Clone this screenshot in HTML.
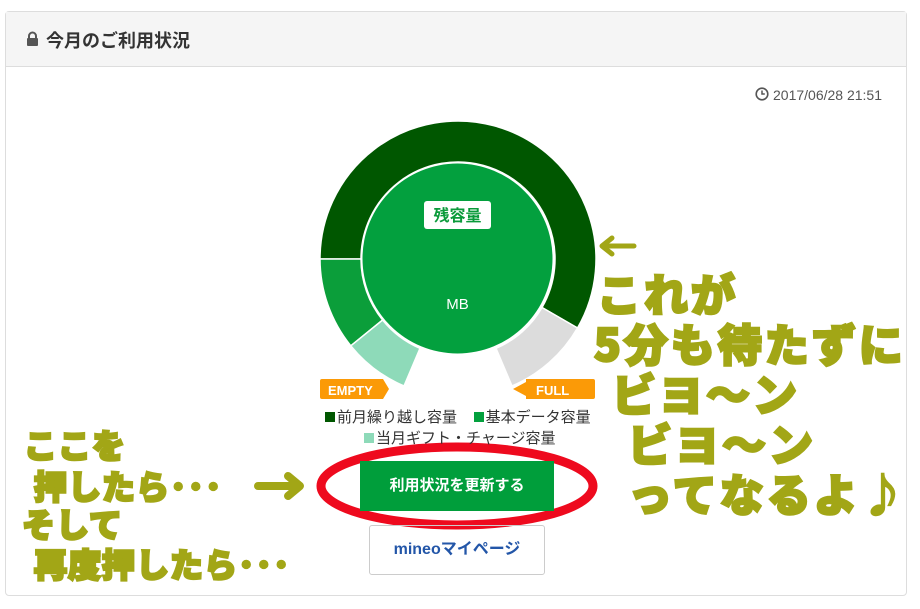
<!DOCTYPE html>
<html><head><meta charset="utf-8"><style>
body{margin:0;width:920px;height:609px;background:#fff;font-family:"Liberation Sans","Noto Sans CJK JP",sans-serif;position:relative;overflow:hidden}
.panel{position:absolute;left:5px;top:11px;width:902px;height:585px;border:1px solid #ddd;border-radius:4px;box-sizing:border-box}
.hd{position:absolute;left:0;top:0;right:0;height:54px;background:#f5f5f5;border-bottom:1px solid #ddd}
.hd span{position:absolute;left:40px;top:15px;font-size:18px;font-weight:bold;color:#333}
.ts{position:absolute;left:755px;top:87px;font-size:14px;color:#555}
.ann{position:absolute;color:#a2a616;font-weight:900;font-family:"Noto Sans CJK JP",sans-serif;-webkit-text-stroke:2.5px #a2a616;white-space:pre;line-height:1}
.leg{position:absolute;font-size:15px;color:#333;white-space:nowrap}
.sq{display:inline-block;width:10px;height:10px;margin-right:2px}
.btn1{position:absolute;left:360px;top:461px;width:194px;height:50px;background:#009e3b;color:#fff;font-weight:bold;font-size:15px;text-align:center;line-height:50px}
.btn2{position:absolute;left:369px;top:525px;width:176px;height:50px;border:1px solid #ccc;border-radius:3px;box-sizing:border-box;color:#2356a8;font-weight:bold;font-size:16px;text-align:center;line-height:48px}
</style></head><body>
<div class="panel"><div class="hd">
<svg style="position:absolute;left:20px;top:19px" width="13" height="16" viewBox="0 0 13 16"><path d="M3 7V5a3.5 3.5 0 0 1 7 0v2" fill="none" stroke="#555" stroke-width="2"/><rect x="1" y="7" width="11" height="8" rx="1" fill="#555"/></svg>
<span>今月のご利用状況</span></div></div>
<svg style="position:absolute;left:755px;top:87px" width="14" height="14" viewBox="0 0 14 14"><circle cx="7" cy="7" r="5.8" fill="none" stroke="#555" stroke-width="1.6"/><path d="M7 3.5V7h2.8" fill="none" stroke="#555" stroke-width="1.5"/></svg>
<div class="ts" style="left:773px">2017/06/28 21:51</div>
<svg style="position:absolute;left:0;top:0" width="920" height="609">
<g stroke="#fff" stroke-width="1.5">
<path d="M320,259 A138,138 0 1 1 577.5,328 L542,307.5 A97,97 0 1 0 361,259 Z" fill="#005700"/>
<path d="M350.8,345.8 A138,138 0 0 1 320,259 L361,259 A97,97 0 0 0 382.6,320 Z" fill="#0b9e3a"/>
<path d="M404,386 A138,138 0 0 1 350.8,345.8 L382.6,320 A97,97 0 0 0 420,348.3 Z" fill="#8edab9"/>
<path d="M577.5,328 A138,138 0 0 1 512,386 L496,348.3 A97,97 0 0 0 542,307.5 Z" fill="#dcdcdc"/>
</g>
<circle cx="457.5" cy="258.5" r="95" fill="#03a03e"/>
<rect x="424" y="201" width="67" height="28" rx="3" fill="#fff"/>
<text x="457.5" y="221" text-anchor="middle" font-size="16" font-weight="bold" fill="#0a9a3a" font-family="Liberation Sans,Noto Sans CJK JP,sans-serif">残容量</text>
<text x="457.5" y="309" text-anchor="middle" font-size="15" fill="#fff" font-family="Liberation Sans,sans-serif">MB</text>
<path d="M322,379 H383 L389,389 L383,399 H322 Q320,399 320,397 V381 Q320,379 322,379Z" fill="#fb9a07"/>
<text x="328" y="395" font-size="13" font-weight="bold" fill="#fff" font-family="Liberation Sans,sans-serif">EMPTY</text>
<path d="M526,379 H593 Q595,379 595,381 V397 Q595,399 593,399 H526 V396 L513,389 L526,382Z" fill="#fb9a07"/>
<text x="536" y="395" font-size="13" font-weight="bold" fill="#fff" font-family="Liberation Sans,sans-serif">FULL</text>
<ellipse cx="457" cy="486" rx="136" ry="39" fill="none" stroke="#ee0a1e" stroke-width="9"/>
<path d="M602,246 H634 M612,238 L602,246 L612,254" fill="none" stroke="#a2a616" stroke-width="5" stroke-linecap="round" stroke-linejoin="round"/>
<path d="M258,486 H298 M288,476 L300,486 L288,496" fill="none" stroke="#a2a616" stroke-width="8" stroke-linecap="round" stroke-linejoin="round"/>
</svg>
<div class="leg" style="left:325px;top:406px"><span class="sq" style="background:#005700"></span>前月繰り越し容量&nbsp;&nbsp;&nbsp; <span class="sq" style="background:#03a03e"></span>基本データ容量</div>
<div class="leg" style="left:364px;top:427px"><span class="sq" style="background:#8edab9"></span>当月ギフト・チャージ容量</div>
<div class="btn1">利用状況を更新する</div>
<div class="btn2">mineoマイページ</div>
<div class="ann" style="left:597px;top:270px;font-size:44px;letter-spacing:3px">これが</div>
<div class="ann" style="left:594px;top:320px;font-size:44px;letter-spacing:3px">5分も待たずに</div>
<div class="ann" style="left:612px;top:370px;font-size:44px;letter-spacing:3px">ビヨ〜ン</div>
<div class="ann" style="left:628px;top:420px;font-size:44px;letter-spacing:3px">ビヨ〜ン</div>
<div class="ann" style="left:628px;top:470px;font-size:44px;letter-spacing:3px">ってなるよ♪</div>
<div class="ann" style="left:24px;top:428px;font-size:33px;letter-spacing:1px">ここを</div>
<div class="ann" style="left:34px;top:469px;font-size:33px;letter-spacing:1px">押したら･･･</div>
<div class="ann" style="left:22px;top:507px;font-size:33px;letter-spacing:1px">そして</div>
<div class="ann" style="left:34px;top:547px;font-size:33px;letter-spacing:1px">再度押したら･･･</div>
</body></html>
